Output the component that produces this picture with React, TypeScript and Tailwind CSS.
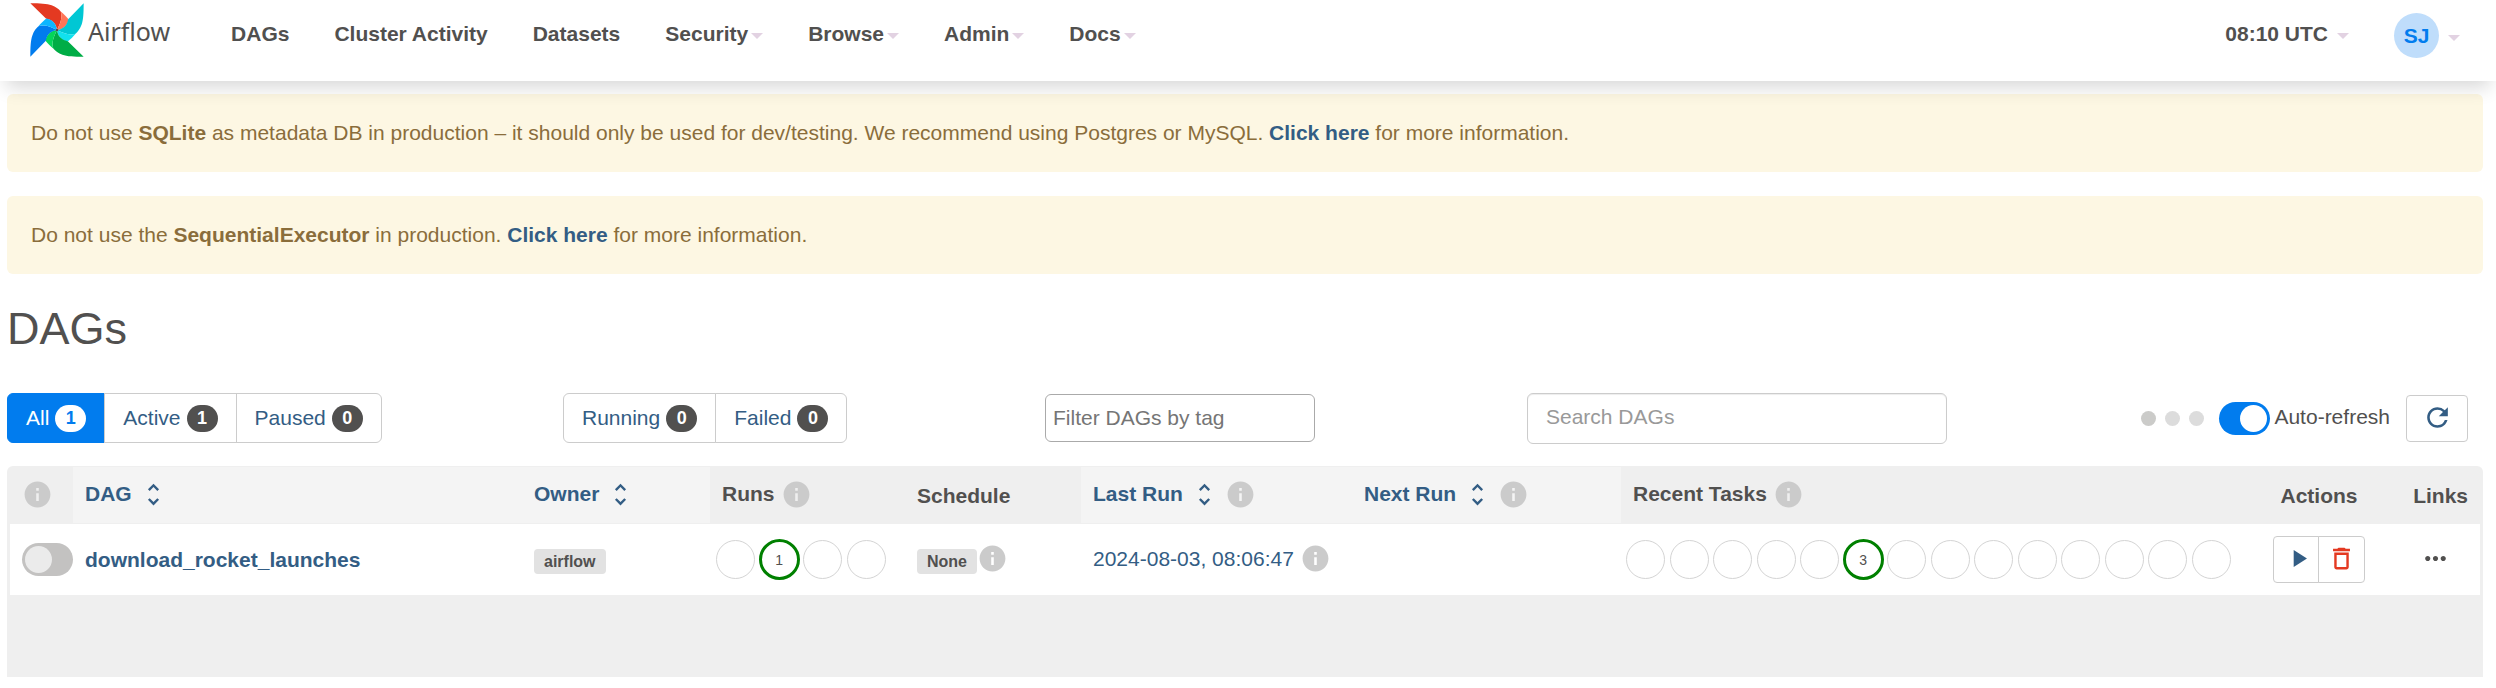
import React from "react";
import {
  MdDeleteOutline,
  MdInfo,
  MdMoreHoriz,
  MdPlayArrow,
  MdRefresh,
  MdUnfoldMore,
} from "react-icons/md";

const blades = [
  { angle: 0, dark: "#e43921", light: "#ff7557" },
  { angle: 90, dark: "#00c7d4", light: "#11e1ee" },
  { angle: 180, dark: "#00ad46", light: "#04d659" },
  { angle: 270, dark: "#017cee", light: "#0cb6ff" },
];

const Pinwheel = () => (
  <svg viewBox="0 0 160 160" className="size-[54px]" aria-hidden="true">
    {blades.map((b) => (
      <g key={b.angle} transform={`rotate(${b.angle} 80 80)`}>
        <path
          fill={b.dark}
          d="M1 1C30 1 50 2 64 7C76 11 85 18 91 25C97 45 89 61 80 80C78 64 68 50 48 47Z"
        />
        <path
          fill={b.light}
          d="M91 25C99 31 108 41 114 48C112 66 98 78 80 80C89 61 97 45 91 25Z"
        />
      </g>
    ))}
    <circle cx="80" cy="80" r="4" fill="#51504f" />
  </svg>
);

const Caret = () => (
  <svg viewBox="0 0 12 6" className="mt-1 h-[6px] w-[12px]" aria-hidden="true">
    <path d="M0 0H12L6 6Z" fill="#e2d2e2" />
  </svg>
);

const navItems = [
  { label: "DAGs" },
  { label: "Cluster Activity" },
  { label: "Datasets" },
  { label: "Security", menu: true },
  { label: "Browse", menu: true },
  { label: "Admin", menu: true },
  { label: "Docs", menu: true },
];

const Navbar = () => (
  <header className="relative z-10 flex h-[81px] items-start justify-between bg-white pl-[30px] pr-[36px] shadow-[0_12px_18px_-6px_rgba(0,0,0,0.16)]">
    <div className="flex items-start">
      <a href="#" className="flex pt-[3px]">
        <Pinwheel />
        <span className="ml-1 pt-[10px] font-['Noto_Sans',sans-serif] text-[25px] leading-[36px]">
          Airflow
        </span>
      </a>
      <nav className="ml-[61px] flex gap-[45px] pt-[19px] font-bold leading-[30px]">
        {navItems.map((item) => (
          <a key={item.label} href="#" className="flex items-center gap-[3px]">
            {item.label}
            {item.menu && <Caret />}
          </a>
        ))}
      </nav>
    </div>
    <div className="flex gap-[45px] pt-[13px] font-bold">
      <button className="flex h-[42px] items-center gap-[9px] font-bold">
        08:10 UTC
        <Caret />
      </button>
      <button className="flex items-center gap-[9px] font-bold">
        <span className="flex size-[45px] items-center justify-center rounded-full bg-[#bfddfb] text-[#017cee]">
          SJ
        </span>
        <Caret />
      </button>
    </div>
  </header>
);

const Alert = ({ children }: { children: React.ReactNode }) => (
  <div className="mb-6 rounded-md bg-[#fdf7e3] px-6 py-6 leading-[30px] text-[#8a6d3b]">
    {children}
  </div>
);

const DocsLink = () => (
  <a href="#" className="font-bold text-[#335d84]">
    Click here
  </a>
);

type Filter = { label: string; count: number; active?: boolean };

const FilterGroup = ({ filters }: { filters: Filter[] }) => (
  <div className="flex">
    {filters.map((f) => (
      <button
        key={f.label}
        className={
          f.active
            ? "flex h-[50px] items-center gap-[6px] border border-[#017cee] bg-[#017cee] px-[18px] text-white first:rounded-l-md"
            : "-ml-px flex h-[50px] items-center gap-[6px] border border-[#ccc] px-[18px] text-[#335d84] first:ml-0 first:rounded-l-md last:rounded-r-md"
        }
      >
        {f.label}
        <span
          className={
            f.active
              ? "flex h-[27px] w-[31px] items-center justify-center rounded-full bg-white text-[18px] font-bold text-[#017cee]"
              : "flex h-[27px] w-[31px] items-center justify-center rounded-full bg-[#51504f] text-[18px] font-bold text-white"
          }
        >
          {f.count}
        </span>
      </button>
    ))}
  </div>
);

const Toolbar = () => (
  <div className="mt-[39px] grid h-[51px] grid-cols-[556fr_482fr_482fr_956fr]">
    <FilterGroup
      filters={[
        { label: "All", count: 1, active: true },
        { label: "Active", count: 1 },
        { label: "Paused", count: 0 },
      ]}
    />
    <FilterGroup
      filters={[
        { label: "Running", count: 0 },
        { label: "Failed", count: 0 },
      ]}
    />
    <div className="flex items-start pt-px">
      <input
        type="text"
        aria-label="Filter DAGs by tag"
        placeholder="Filter DAGs by tag"
        className="h-[48px] w-[270px] rounded-md border border-[#aaa] px-[7px] placeholder:text-[#757575]"
      />
    </div>
    <div className="flex justify-between pr-[15px]">
      <input
        type="search"
        aria-label="Search DAGs"
        placeholder="Search DAGs"
        className="h-[51px] w-[420px] rounded-md border border-[#ccc] px-[18px] pb-[3px] shadow-[inset_0_1px_1px_rgba(0,0,0,0.075)] placeholder:text-[#999]"
      />
      <div className="flex items-center">
        <div className="flex gap-[9px]">
          <span className="size-[15px] rounded-full bg-[#cbcbc9]" />
          <span className="size-[15px] rounded-full bg-[#dcdcdc]" />
          <span className="size-[15px] rounded-full bg-[#dcdcdc]" />
        </div>
        <label className="ml-[15px] flex items-center gap-1">
          <Switch defaultChecked />
          <span className="pb-1">Auto-refresh</span>
        </label>
        <button
          aria-label="Refresh"
          className="ml-4 flex h-[47px] w-[62px] items-center justify-center rounded border border-[#ccc] pb-[2px] text-[#335d84]"
        >
          <MdRefresh className="size-[31px]" />
        </button>
      </div>
    </div>
  </div>
);

const Switch = (props: React.InputHTMLAttributes<HTMLInputElement>) => (
  <input
    type="checkbox"
    className="block h-[33px] w-[51px] shrink-0 appearance-none rounded-full bg-[#c3c2c1] p-[3px] before:block before:size-[27px] before:rounded-full before:bg-[#ebebeb] checked:bg-[#017cee] checked:before:ml-[18px] checked:before:bg-white"
    {...props}
  />
);

const Info = () => <MdInfo className="size-[31px] shrink-0 text-[#cbcbcb]" />;

const SortHeader = ({ label, info }: { label: string; info?: boolean }) => (
  <th className="border-y border-[#efefef] bg-[#f4f4f4] px-3 pb-[2px] text-left">
    <div className="flex items-center">
      <a href="#" className="flex items-center gap-[7px] text-[#335d84]">
        {label}
        <MdUnfoldMore className="size-[29px]" />
      </a>
      {info && (
        <span className="ml-[6px]">
          <Info />
        </span>
      )}
    </div>
  </th>
);

const Circles = ({ counts }: { counts: (number | null)[] }) => (
  <>
    {counts.map((count, i) =>
      count ? (
        <a
          key={i}
          href="#"
          className="-m-px flex size-[41px] items-center justify-center rounded-full border-[3px] border-[#008000] text-[14px]"
        >
          {count}
        </a>
      ) : (
        <span key={i} className="size-[39px] rounded-full border border-[#d4d4d4]" />
      )
    )}
  </>
);

const Tag = ({ children }: { children: React.ReactNode }) => (
  <a
    href="#"
    className="inline-block rounded bg-[#e2e2e2] px-[10px] text-[16px] font-bold leading-[25px]"
  >
    {children}
  </a>
);

const DagTable = () => (
  <div className="mt-[22px] rounded-t-md bg-[#efefef] px-[3px] pb-[82px]">
    <table className="w-full table-fixed border-separate border-spacing-0">
      <colgroup>
        <col className="w-[63px]" />
        <col />
        <col className="w-[188px]" />
        <col className="w-[195px]" />
        <col className="w-[176px]" />
        <col className="w-[271px]" />
        <col className="w-[269px]" />
        <col className="w-[640px]" />
        <col className="w-[116px]" />
        <col className="w-[103px]" />
      </colgroup>
      <thead>
        <tr className="h-[58px]">
          <th className="pb-[2px] pl-3">
            <Info />
          </th>
          <SortHeader label="DAG" />
          <SortHeader label="Owner" />
          <th className="px-3 pb-[2px]">
            <div className="flex items-center gap-[6px]">
              Runs <Info />
            </div>
          </th>
          <th className="px-3 pt-[2px] text-left">Schedule</th>
          <SortHeader label="Last Run" info />
          <SortHeader label="Next Run" info />
          <th className="px-3 pb-[2px]">
            <div className="flex items-center gap-[6px]">
              Recent Tasks <Info />
            </div>
          </th>
          <th className="pt-[2px] text-center">Actions</th>
          <th className="px-3 pt-[2px] text-right">Links</th>
        </tr>
      </thead>
      <tbody>
        <tr className="h-[71px] bg-white">
          <td className="pl-3">
            <Switch aria-label="Pause or unpause download_rocket_launches" />
          </td>
          <td className="px-3">
            <a href="#" className="font-bold text-[#335d84]">
              download_rocket_launches
            </a>
          </td>
          <td className="px-3">
            <Tag>airflow</Tag>
          </td>
          <td className="pl-[6px]">
            <div className="flex w-[170px] justify-between">
              <Circles counts={[null, 1, null, null]} />
            </div>
          </td>
          <td className="pb-[2px] pl-3">
            <div className="flex items-center">
              <span className="pt-[2px]">
                <Tag>None</Tag>
              </span>
              <Info />
            </div>
          </td>
          <td className="pb-[2px] pl-3">
            <div className="flex items-center gap-[6px]">
              <a href="#" className="whitespace-nowrap text-[#335d84]">
                2024-08-03, 08:06:47
              </a>
              <Info />
            </div>
          </td>
          <td />
          <td className="pl-[5px]">
            <div className="flex w-[605px] justify-between">
              <Circles
                counts={[
                  null, null, null, null, null, 3, null,
                  null, null, null, null, null, null, null,
                ]}
              />
            </div>
          </td>
          <td className="pl-3">
            <div className="flex">
              <button
                aria-label="Trigger DAG"
                className="flex h-[47px] w-[46px] items-center justify-center rounded-l border border-[#ccc] pb-[2px] pl-1 text-[#335d84]"
              >
                <MdPlayArrow className="size-[29px]" />
              </button>
              <button
                aria-label="Delete DAG"
                className="-ml-px flex h-[47px] w-[47px] items-center justify-center rounded-r border border-[#ccc] pb-[2px] text-[#e43921]"
              >
                <MdDeleteOutline className="size-[29px]" />
              </button>
            </div>
          </td>
          <td className="pb-[2px]">
            <a href="#" aria-label="Links" className="flex justify-end pr-[29px]">
              <MdMoreHoriz className="size-[31px]" />
            </a>
          </td>
        </tr>
      </tbody>
    </table>
  </div>
);

const App = () => {
  return (
    <div className="min-h-screen bg-white font-['Liberation_Sans',Arial,sans-serif] text-[21px] leading-[30px] text-[#51504f]">
      <Navbar />
      <main className="pl-[7px] pr-[13px] pt-[13px]">
        <Alert>
          Do not use <strong>SQLite</strong> as metadata DB in production – it
          should only be used for dev/testing. We recommend using Postgres or
          MySQL. <DocsLink /> for more information.
        </Alert>
        <Alert>
          Do not use the <strong>SequentialExecutor</strong> in production.{" "}
          <DocsLink /> for more information.
        </Alert>
        <h1 className="pt-[6px] text-[45px] leading-[50px]">DAGs</h1>
        <Toolbar />
        <DagTable />
      </main>
    </div>
  );
};

export default App;
